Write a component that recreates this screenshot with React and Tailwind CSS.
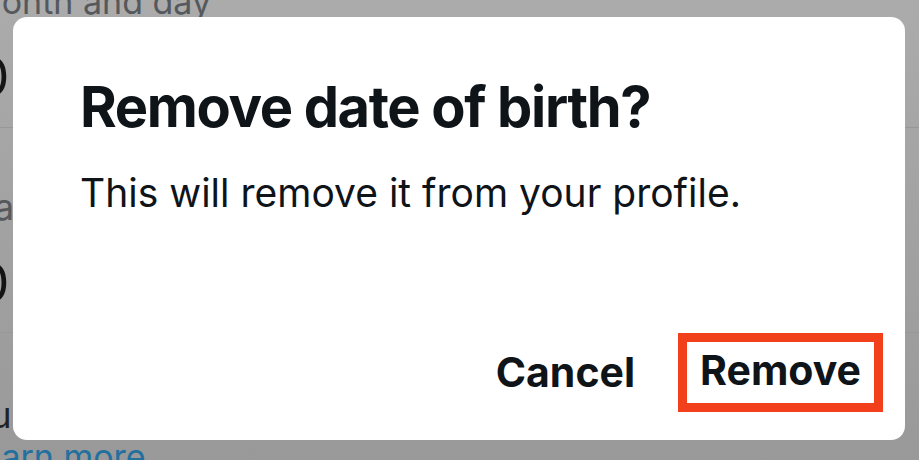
export default function App() {
  const font = { fontFamily: 'Inter, "Noto Sans", sans-serif' };
  return (
    <div
      className="relative h-[460px] w-[919px] overflow-hidden bg-linear-to-b from-[#ababab] to-[#999999]"
      style={font}
    >
      <div className="flex flex-col">
        <div className="-mt-[15px] -ml-[29px] whitespace-nowrap text-[34px] leading-none text-[#55585c]">
          Month and day
        </div>
        <div className="mt-[32px] -ml-[24px] whitespace-nowrap text-[53px] leading-none text-[#141414]">
          0
        </div>
        <div className="mt-[23px] h-px bg-[#979797]" />
        <div className="mt-[61px] -ml-[49px] whitespace-nowrap text-[36px] leading-none text-[#55585c]">
          Year
        </div>
        <div className="mt-[32px] -ml-[24px] whitespace-nowrap text-[53px] leading-none text-[#141414]">
          0
        </div>
        <div className="mt-[22px] h-px bg-[#979797]" />
        <div className="mt-[64px] -ml-[53px] whitespace-nowrap text-[36px] leading-none text-[#222]">
          You
        </div>
        <div className="mt-[7px] -ml-[38px] whitespace-nowrap text-[34px] leading-none text-[#23709f]">
          Learn more
        </div>
      </div>

      <div className="absolute left-[13px] top-[17px] flex h-[423px] w-[892px] flex-col rounded-[14px] bg-white pb-[28px] pl-[67px] pr-[22px] pt-[62px] text-[#0f1419]">
        <div className="whitespace-nowrap text-[56px] font-bold leading-none tracking-[-1.35px]">
          Remove date of birth?
        </div>
        <div className="mt-[38px] text-[39px] leading-none">
          This will remove it from your profile.
        </div>
        <div className="mt-auto flex items-center justify-end gap-[43px]">
          <div className="text-[41px] font-bold leading-none">Cancel</div>
          <div className="border-[9px] border-[#f2401c] px-[13px] pb-[12px] pt-[8px] text-[41px] font-bold leading-none">
            Remove
          </div>
        </div>
      </div>
    </div>
  );
}
